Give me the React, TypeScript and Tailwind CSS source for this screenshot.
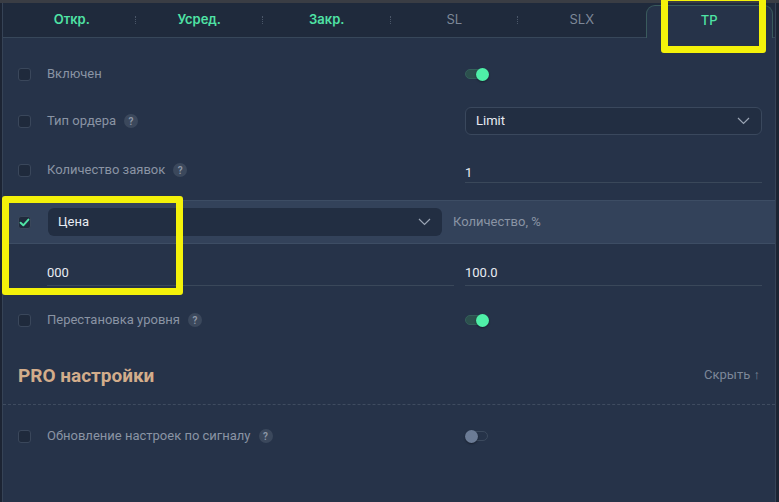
import React from "react";

const font = { fontFamily: "Roboto, 'Noto Sans', sans-serif" };

function Check({ checked = false }: { checked?: boolean }) {
  return (
    <div className="w-[13px] h-[13px] rounded-[3px] border border-[#3a475b] bg-[#1f2a3c] flex items-center justify-center shrink-0">
      {checked && (
        <svg width="11" height="11" viewBox="0 0 11 11">
          <path d="M1.6 5.8 L4.3 8.3 L9.4 2.6" stroke="#4fe3a5" strokeWidth="2" fill="none" strokeLinecap="round" strokeLinejoin="round" />
        </svg>
      )}
    </div>
  );
}

function Help() {
  return (
    <span className="ml-[8px] w-[14px] h-[14px] rounded-full bg-[#3b485c] text-[#8e98a8] text-[10px] font-semibold flex items-center justify-center">?</span>
  );
}

function Toggle({ on }: { on: boolean }) {
  if (on)
    return (
      <div className="relative w-[24px] h-[13px] flex items-center">
        <div className="w-[20px] h-[10px] rounded-full bg-[#2c504d] border border-[#34605a]" />
        <div className="absolute right-0 top-0 w-[13px] h-[13px] rounded-full bg-[#4ff0a8] shadow-[0_1px_2px_rgba(0,0,0,0.4)]" />
      </div>
    );
  return (
    <div className="relative w-[24px] h-[13px] flex items-center">
      <div className="ml-[3px] w-[20px] h-[10px] rounded-full border border-[#3c4a5e]" />
      <div className="absolute left-0 top-0 w-[13px] h-[13px] rounded-full bg-[#6b7b95] shadow-[0_1px_2px_rgba(0,0,0,0.4)]" />
    </div>
  );
}

function Chevron() {
  return (
    <svg width="13" height="8" viewBox="0 0 13 8">
      <path d="M1 1 L6.5 6.5 L12 1" stroke="#9aa4b4" strokeWidth="1.2" fill="none" />
    </svg>
  );
}

function Label({ text, help }: { text: string; help?: boolean }) {
  return (
    <div className="flex items-center text-[13px] text-[#8a94a4]">
      <span>{text}</span>
      {help && <Help />}
    </div>
  );
}

export default function App() {
  const tabs = ["Откр.", "Усред.", "Закр.", "SL", "SLX", "TP"];
  return (
    <div className="relative w-[779px] h-[502px] bg-[#1c2433] flex flex-col overflow-hidden" style={font}>
      <div className="h-[3px] bg-[#3a3d44] shrink-0" />
      <div className="flex-1 flex flex-col ml-[2px] mr-[3px] border-l border-r border-[#364356] bg-[#263349]">
        {/* tab bar */}
        <div className="h-[35px] shrink-0 bg-[#1f2a3c] border-b border-[#37475a] flex pl-[5px] pr-[2px]" style={{ fontFamily: "Inter, sans-serif" }}>
          {tabs.map((t, i) => {
            const active = i === 5;
            return (
              <div key={t} className="relative flex-1 flex items-center justify-center">
                {active ? (
                  <div className="absolute inset-x-0 top-[2px] bottom-[-1px] rounded-t-[9px] border border-b-0 border-[#3a5b5d] bg-[#263349] flex items-center justify-center">
                    <span className="text-[13px] font-medium text-[#4fe3a5] -mt-[2px]">{t}</span>
                  </div>
                ) : (
                  <span className={"text-[13px] -mt-[1px] " + (i < 3 ? "font-semibold text-[#4fe3a5]" : "text-[#7d8798]")}>{t}</span>
                )}
                {i < 4 && (
                  <div className="absolute right-0 top-[13px] h-[8px] border-r border-dotted border-[#4a5668]" />
                )}
              </div>
            );
          })}
        </div>

        {/* rows */}
        <div className="flex flex-col pt-[13px]">
          <div className="h-[46px] flex items-center pl-[15px]">
            <Check />
            <div className="ml-[16px] w-[405px]"><Label text="Включен" /></div>
            <div className="ml-[13px]"><Toggle on /></div>
          </div>

          <div className="h-[48px] flex items-center pl-[15px]">
            <Check />
            <div className="ml-[16px] w-[405px]"><Label text="Тип ордера" help /></div>
            <div className="ml-[13px] w-[297px] h-[28px] rounded-[6px] border border-[#3a485d] bg-[#222e42] flex items-center justify-between pl-[10px] pr-[11px]">
              <span className="text-[13px] text-[#e8ecf2]">Limit</span>
              <Chevron />
            </div>
          </div>

          <div className="h-[50px] flex items-center pl-[15px]">
            <Check />
            <div className="ml-[16px] w-[405px]"><Label text="Количество заявок" help /></div>
            <div className="ml-[13px] w-[297px] h-[26px] pt-[6px] border-b border-[#3a485a] text-[13px] text-[#e8ecf2] flex items-center">1</div>
          </div>

          <div className="h-[5px]" />

          <div className="h-[44px] flex items-center pl-[15px] bg-[#33425a] border-y border-[#3d4d64]">
            <Check checked />
            <div className="ml-[17px] w-[394px] h-[28px] rounded-[6px] bg-[#222e42] flex items-center justify-between pl-[10px] pr-[11px]">
              <span className="text-[13px] text-[#e8ecf2]">Цена</span>
              <Chevron />
            </div>
            <div className="ml-[11px] text-[13px] text-[#8a94a4]">Количество, %</div>
          </div>

          <div className="h-[58px] flex items-start pl-[44px] pt-[16px]">
            <div className="w-[407px] h-[26px] border-b border-[#3a485a] text-[13px] text-[#e8ecf2] flex items-center">000</div>
            <div className="ml-[11px] w-[297px] h-[26px] border-b border-[#3a485a] text-[13px] text-[#e8ecf2] flex items-center">100.0</div>
          </div>

          <div className="h-[36px] flex items-center pl-[15px]">
            <Check />
            <div className="ml-[16px] w-[405px]"><Label text="Перестановка уровня" help /></div>
            <div className="ml-[13px]"><Toggle on /></div>
          </div>

          <div className="h-[67px] flex items-center justify-between pl-[15px] pr-[15px] border-b border-dashed border-[#3f4c60]">
            <span className="text-[19px] font-bold text-[#d3ad8b] mt-[10px]" style={{ fontFamily: "Roboto, sans-serif" }}>PRO настройки</span>
            <span className="text-[13px] text-[#7d8798] mt-[8px]">Скрыть ↑</span>
          </div>

          <div className="h-[62px] flex items-center pl-[15px]">
            <Check />
            <div className="ml-[16px] w-[405px]"><Label text="Обновление настроек по сигналу" help /></div>
            <div className="ml-[13px]"><Toggle on={false} /></div>
          </div>
        </div>
      </div>

      {/* yellow annotations */}
      <div className="absolute left-[661px] top-[-6px] w-[105px] h-[59px] border-[7px] border-[#f4f20a] rounded-[3px]" />
      <div className="absolute left-[2px] top-[196px] w-[181px] h-[99px] border-[7px] border-[#f4f20a] rounded-[3px]" />
    </div>
  );
}
